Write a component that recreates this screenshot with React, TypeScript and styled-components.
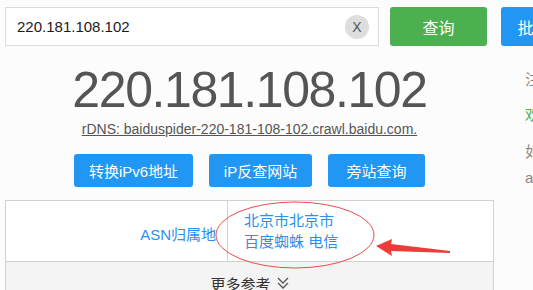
import React from "react";
import styled, { createGlobalStyle } from "styled-components";

const GlobalStyle = createGlobalStyle`
  html, body {
    margin: 0;
    padding: 0;
    background: #fcfcfc;
    font-family: "Liberation Sans", "Noto Sans CJK SC", sans-serif;
    overflow: hidden;
  }
`;

const Page = styled.div`
  display: flex;
  align-items: flex-start;
  gap: 31px;
  padding: 7px 0 0 5px;
  width: 640px;
`;

const Main = styled.div`
  width: 489px;
  display: flex;
  flex-direction: column;
`;

const SearchRow = styled.div`
  display: flex;
  align-items: center;
  width: 640px;
`;

const InputBox = styled.div`
  box-sizing: border-box;
  width: 374px;
  height: 39px;
  border: 1px solid #dcdcdc;
  background: #fff;
  display: flex;
  align-items: center;
  justify-content: space-between;
  padding: 0 9px 0 11px;
  font-size: 15px;
  color: #1a1a1a;
`;

const ClearBtn = styled.span`
  width: 24px;
  height: 24px;
  border-radius: 50%;
  background: #dedede;
  color: #555;
  font-size: 14px;
  display: flex;
  align-items: center;
  justify-content: center;
`;

const ActionBtn = styled.button<{ $bg: string; $ml: number }>`
  box-sizing: border-box;
  height: 39px;
  width: 97px;
  margin-left: ${(p) => p.$ml}px;
  border: none;
  border-radius: 3px;
  background: ${(p) => p.$bg};
  color: #fff;
  font-family: inherit;
  font-size: 16px;
  flex-shrink: 0;
`;

const BigIp = styled.div`
  margin-top: 16px;
  text-align: center;
  font-size: 50px;
  letter-spacing: -1.4px;
  line-height: 57px;
  color: #555;
`;

const Rdns = styled.a`
  align-self: center;
  margin-top: 2px;
  font-size: 14px;
  line-height: 16px;
  color: #555;
  text-decoration: underline;
`;

const ToolRow = styled.div`
  display: flex;
  justify-content: center;
  gap: 16px;
  margin-top: 17px;
`;

const ToolBtn = styled.button<{ $w: number }>`
  box-sizing: border-box;
  width: ${(p) => p.$w}px;
  height: 33px;
  border: none;
  border-radius: 3px;
  background: #2196f3;
  color: #fff;
  font-family: inherit;
  font-size: 15px;
  padding: 0;
`;

const TableWrap = styled.div`
  position: relative;
  margin-top: 13px;
  border: 1px solid #d2d2d2;
  border-bottom: none;
`;

const InfoRow = styled.div`
  display: grid;
  grid-template-columns: 222px 1fr;
  height: 60px;
  border-bottom: 1px solid #d2d2d2;
  background: #fff;
`;

const Label = styled.div`
  display: flex;
  align-items: center;
  justify-content: flex-end;
  padding: 4px 11px 0 0;
  border-right: 1px solid #d2d2d2;
  font-size: 15px;
  color: #2a8ff0;
`;

const Value = styled.div`
  display: flex;
  flex-direction: column;
  justify-content: center;
  padding: 0 0 0 16px;
  font-size: 15px;
  line-height: 21px;
  color: #2a8ff0;
`;

const MoreRow = styled.div`
  height: 40px;
  background: #f4f4f4;
  display: flex;
  justify-content: center;
  align-items: flex-start;
  gap: 6px;
  padding-top: 11px;
  font-size: 15px;
  color: #333;
`;

const Overlay = styled.svg`
  position: absolute;
  left: -1px;
  top: -1px;
  pointer-events: none;
`;

const Side = styled.div`
  display: flex;
  flex-direction: column;
  font-size: 15px;
  color: #888;
  white-space: nowrap;
`;

const SideLine = styled.div<{ $mt: number; $color?: string }>`
  margin-top: ${(p) => p.$mt}px;
  line-height: 18px;
  color: ${(p) => p.$color || "#888"};
`;

export default function App() {
  return (
    <>
      <GlobalStyle />
      <Page>
        <Main>
          <SearchRow>
            <InputBox>
              220.181.108.102
              <ClearBtn>X</ClearBtn>
            </InputBox>
            <ActionBtn $bg="#4caf50" $ml={11}>查询</ActionBtn>
            <ActionBtn $bg="#2196f3" $ml={14}>批量查询</ActionBtn>
          </SearchRow>
          <BigIp>220.181.108.102</BigIp>
          <Rdns>rDNS: baiduspider-220-181-108-102.crawl.baidu.com.</Rdns>
          <ToolRow>
            <ToolBtn $w={119}>转换iPv6地址</ToolBtn>
            <ToolBtn $w={103}>iP反查网站</ToolBtn>
            <ToolBtn $w={97}>旁站查询</ToolBtn>
          </ToolRow>
          <TableWrap>
            <InfoRow>
              <Label>ASN归属地</Label>
              <Value>
                <span>北京市北京市</span>
                <span>百度蜘蛛 电信</span>
              </Value>
            </InfoRow>
            <MoreRow>
              更多参考
              <svg width="12" height="14" viewBox="0 0 12 14" style={{ marginTop: 3 }}>
                <path d="M1 2 L6 7 L11 2 M1 7 L6 12 L11 7" fill="none" stroke="#555" strokeWidth="1.3" />
              </svg>
            </MoreRow>
            <Overlay width="489" height="90" viewBox="0 0 489 90">
              <ellipse cx="290" cy="35" rx="79" ry="33" fill="none" stroke="#ee4a4a" strokeWidth="1" />
              <polygon
                points="371,46 387,39 386,44 445,51 445,53 386,51 387,56"
                fill="#f03a3a"
              />
            </Overlay>
          </TableWrap>
        </Main>
        <Side>
          <SideLine $mt={64}>注意</SideLine>
          <SideLine $mt={17} $color="#4caf50">欢迎</SideLine>
          <SideLine $mt={19}>如果</SideLine>
          <SideLine $mt={8}>a</SideLine>
        </Side>
      </Page>
    </>
  );
}
